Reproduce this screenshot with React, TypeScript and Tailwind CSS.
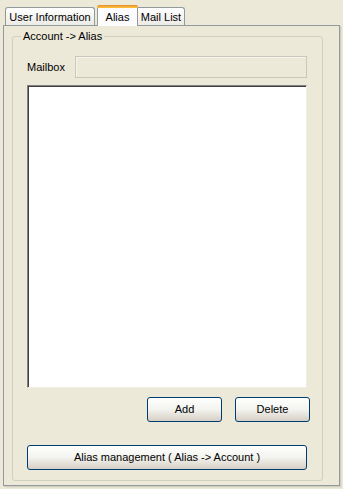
import React from "react";

const btn =
  "h-[25px] rounded-[3px] border border-[#003C74] bg-gradient-to-b from-[#FFFFFF] via-[#F3F3EF] to-[#D6D0C5] text-[11px] text-black flex items-center justify-center shadow-[inset_0_-1px_0_#D6D0C5,inset_0_1px_0_#FFFFFF]";

export default function App() {
  return (
    <div
      className="w-[343px] h-[489px] bg-[#ECE9D8] text-[11px] text-black overflow-hidden"
      style={{ fontFamily: '"Liberation Sans", Arial, sans-serif' }}
    >
      {/* tab strip */}
      <div className="h-[25px] pl-[5px] flex items-end">
        <div className="h-[18px] w-[90px] border border-b-0 border-[#919B9C] rounded-t-[3px] bg-gradient-to-b from-[#FFFFFF] to-[#ECEBE6] flex items-center justify-center pt-[1px]">
          User Information
        </div>
        <div className="relative z-10 -mb-px ml-[2px] h-[21px] w-[41px] border border-b-0 border-[#919B9C] rounded-t-[3px] bg-[#FCFCFE] flex flex-col">
          <div className="h-[3px] -mx-px -mt-px rounded-t-[3px] bg-gradient-to-b from-[#E68B2C] to-[#FFC73C]" />
          <div className="flex-1 flex items-center justify-center">Alias</div>
        </div>
        <div className="h-[18px] w-[47px] border border-b-0 border-l-0 border-[#919B9C] rounded-tr-[3px] bg-gradient-to-b from-[#FFFFFF] to-[#ECEBE6] flex items-center justify-center pt-[1px]">
          Mail List
        </div>
      </div>

      {/* tab panel */}
      <div className="ml-[3px] w-[337px] h-[461px] border border-[#919B9C] bg-[#ECE9D8] shadow-[1px_1px_0_#D0CEBF,2px_2px_0_#E3E0D0] pt-[10px] pl-[8px]">
        {/* group box */}
        <div className="relative w-[311px] h-[445px] border border-[#D0D0BF] rounded-[3px] pt-[19px] pl-[14px]">
          <div className="absolute left-[8px] -top-[7px] px-[2px] bg-[#ECE9D8] leading-[13px]">
            Account -&gt; Alias
          </div>

          <div className="flex items-center h-[22px]">
            <div className="w-[48px]">Mailbox</div>
            <div className="w-[232px] h-[22px] border border-[#C9C7BA] bg-[#ECE9D8] shadow-[inset_1px_1px_0_#F5F4EE]" />
          </div>

          <div className="mt-[7px] w-[280px] h-[303px] bg-white border border-t-[#808080] border-l-[#808080] border-r-[#F1EFE2] border-b-[#F1EFE2] shadow-[inset_1px_1px_0_#404040]" />

          <div className="mt-[9px] flex gap-[13px] pl-[120px]">
            <button className={`${btn} w-[75px]`}>Add</button>
            <button className={`${btn} w-[75px]`}>Delete</button>
          </div>

          <button className={`${btn} mt-[23px] w-[280px]`}>
            Alias management ( Alias -&gt; Account )
          </button>
        </div>
      </div>
    </div>
  );
}
